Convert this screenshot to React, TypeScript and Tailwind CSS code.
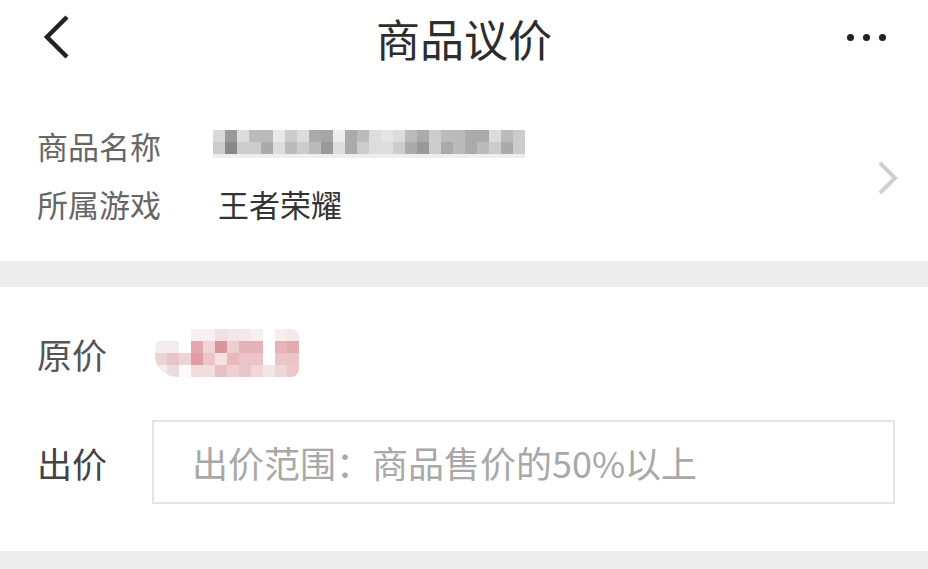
const nameRow1 = ["#d9d9d9", "#999999", "#dddddd", "#bbbbbb", "#bbbbbb", "#e8e8e8", "#cccccc", "#dddddd", "#aaaaaa", "#a5a5a5", "#eeeeee", "#aaaaaa", "#bbbbbb", "#dddddd", "#e5e5e5", "#dddddd", "#bbbbbb", "#aaaaaa", "#cccccc", "#bbbbbb", "#bbbbbb", "#aaaaaa", "#aaaaaa", "#dddddd", "#bbbbbb", "#cccccc"];
const nameRow2 = ["#cccccc", "#888888", "#cccccc", "#cccccc", "#aaaaaa", "#dddddd", "#bbbbbb", "#cccccc", "#bbbbbb", "#999999", "#dddddd", "#aaaaaa", "#cccccc", "#dddddd", "#dddddd", "#cccccc", "#aaaaaa", "#999999", "#cccccc", "#aaaaaa", "#bbbbbb", "#aaaaaa", "#bbbbbb", "#cccccc", "#aaaaaa", "#cccccc"];

const priceRows = [
  ["#ffffff", "#ffffff", "#ffffff", "#f8f0f0", "#f8f0f0", "#efe0e3", "#f2e6e8", "#f3e8ea", "#f8f0f0", "#ffffff", "#f7eeee", "#f3e9e9"],
  ["#f5eded", "#f5eded", "#ffffff", "#e3a8ad", "#f0d5d7", "#d9949c", "#eccdd1", "#e4b3b7", "#e5b3b7", "#ffffff", "#e6b5ba", "#e3aaaf"],
  ["#ecd3d4", "#e8c4c6", "#edd4d7", "#e09ea4", "#edc5c8", "#f5e1e2", "#e8b8bd", "#ecc4c7", "#ecc4c7", "#ffffff", "#edc4c7", "#ecc4c7"],
  ["#f5eded", "#ecdcdc", "#fefafa", "#f3dcdd", "#f3dede", "#e9c1c4", "#eecfd2", "#ebc6c9", "#f0d6d8", "#f1e5e5", "#efd6d8", "#ecc6c9"],
];

function Mosaic({ rows, cell, h }: { rows: string[][]; cell: number; h: number }) {
  return (
    <div className="flex flex-col">
      {rows.map((row, i) => (
        <div key={i} className="flex">
          {row.map((c, j) => (
            <div key={j} style={{ background: c, width: cell, height: h }} />
          ))}
        </div>
      ))}
    </div>
  );
}

export default function App() {
  const font = { fontFamily: '"Noto Sans CJK SC", "Noto Sans", sans-serif' };

  return (
    <div className="w-[928px] h-[569px] bg-white overflow-hidden" style={font}>
      {/* header */}
      <div className="h-[80px] flex items-center justify-between px-[40px] relative">
        <svg width="32" height="46" viewBox="0 0 32 46" className="mt-[-6px]">
          <path d="M27 3 L7 23 L27 43" fill="none" stroke="#222" strokeWidth="4.5" />
        </svg>
        <h1 className="absolute left-0 right-0 text-center text-[44px] leading-none text-[#2d2d2d] pointer-events-none mt-[-4px]">
          商品议价
        </h1>
        <div className="flex gap-[9px] mr-[2px] mt-[-6px]">
          <span className="w-[7px] h-[7px] rounded-full bg-[#222]" />
          <span className="w-[7px] h-[7px] rounded-full bg-[#222]" />
          <span className="w-[7px] h-[7px] rounded-full bg-[#222]" />
        </div>
      </div>

      {/* goods info */}
      <div className="h-[181px] flex items-center pl-[37px] pr-[28px]">
        <div className="flex-1 flex flex-col gap-[22px] pt-[8px]">
          <div className="flex items-center h-[36px]">
            <span className="w-[176px] text-[31px] leading-none text-[#666]">商品名称</span>
            <div className="flex flex-col mt-[-4px]">
              <Mosaic rows={[nameRow1, nameRow2]} cell={12} h={12} />
              <div className="w-[312px] h-[4px] bg-[#eeeeee]" />
            </div>
          </div>
          <div className="flex items-center h-[36px]">
            <span className="w-[181px] text-[31px] leading-none text-[#666]">所属游戏</span>
            <span className="text-[31px] leading-none text-[#333]">王者荣耀</span>
          </div>
        </div>
        <svg width="24" height="36" viewBox="0 0 24 36" className="mt-[14px]">
          <path d="M4 3 L19 18 L4 33" fill="none" stroke="#cfcfcf" strokeWidth="4" />
        </svg>
      </div>

      <div className="h-[26px] bg-[#ededed]" />

      {/* price */}
      <div className="h-[264px] flex flex-col pl-[37px] pr-[33px]">
        <div className="flex items-center h-[66px] mt-[33px]">
          <span className="w-[118px] text-[35px] leading-none text-[#555]">原价</span>
          <div className="rounded-l-[22px] rounded-r-[8px] overflow-hidden">
            <Mosaic rows={priceRows} cell={12} h={12} />
          </div>
        </div>
        <div className="flex items-center mt-[34px]">
          <span className="w-[115px] text-[35px] leading-none text-[#444]">出价</span>
          <div className="flex-1 h-[84px] border-2 border-[#e4e4e4] flex items-center pl-[38px]">
            <input
              className="w-full outline-none bg-transparent text-[36px] text-[#333] placeholder:text-[#a8a8a8]"
              placeholder="出价范围：商品售价的50%以上"
              style={font}
            />
          </div>
        </div>
      </div>

      <div className="h-[18px] bg-[#ededed]" />
    </div>
  );
}
